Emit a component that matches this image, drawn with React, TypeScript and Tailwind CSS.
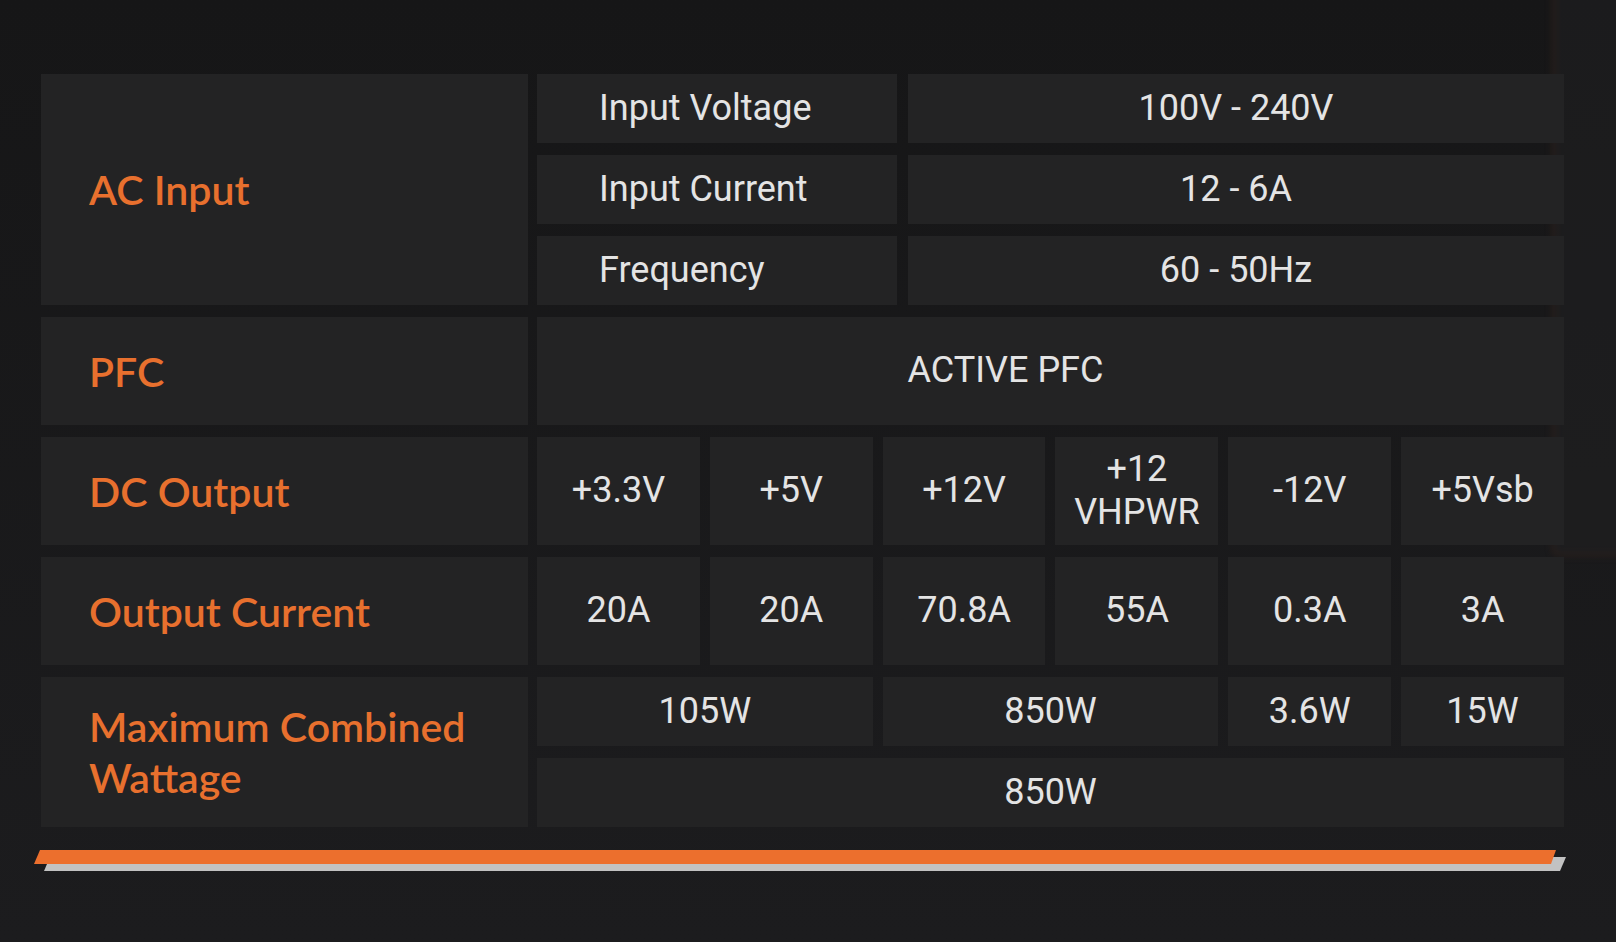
import React from 'react';

const cell = 'bg-[#232324] flex items-center justify-center text-center';
const valueText = "font-['Roboto',sans-serif] text-[36px] leading-[1.2] text-[#e4e4e4]";
const labelText = "font-['Lato','Open_Sans',sans-serif] font-semibold text-[41px] leading-[51px] text-[#e8702e]";

const dcRails = ['+3.3V', '+5V', '+12V', '+12\nVHPWR', '-12V', '+5Vsb'];
const currents = ['20A', '20A', '70.8A', '55A', '0.3A', '3A'];

const acRows = [
    { label: 'Input Voltage', value: '100V - 240V' },
    { label: 'Input Current', value: '12 - 6A' },
    { label: 'Frequency', value: '60 - 50Hz' },
];

const RowLabel: React.FC<{ children: React.ReactNode }> = ({ children }) => (
    <div className="w-[487px] shrink-0 bg-[#232324] flex items-center pl-[48px]">
        <span className={labelText}>{children}</span>
    </div>
);

export default function App() {
    return (
        <div className="relative w-full h-[942px] overflow-hidden bg-linear-to-b from-[#161617] to-[#1c1c1e]">
            {/* faint glow from the product shot behind */}
            <div className="absolute left-[1552px] top-[-20px] w-[140px] h-[576px] border-l-[3px] border-b-[3px] border-[#3a2419]/60 blur-[3px] rounded-bl-[6px] bg-[#1f1f21]/60" />

            <div className="relative pt-[74px] pl-[41px] w-[1580px] flex flex-col">
                <div className="flex flex-col gap-[12px] w-[1523px]">
                    {/* AC input */}
                    <div className="flex gap-[9px]">
                        <RowLabel>AC Input</RowLabel>
                        <div className="flex-1 flex flex-col gap-[12px]">
                            {acRows.map((r) => (
                                <div key={r.label} className="flex gap-[11px] h-[69px]">
                                    <div className="w-[360px] bg-[#232324] flex items-center pl-[62px]">
                                        <span className={valueText}>{r.label}</span>
                                    </div>
                                    <div className={`flex-1 ${cell}`}>
                                        <span className={valueText}>{r.value}</span>
                                    </div>
                                </div>
                            ))}
                        </div>
                    </div>

                    {/* PFC */}
                    <div className="flex gap-[9px] h-[108px]">
                        <RowLabel>PFC</RowLabel>
                        <div className={`flex-1 ${cell} pr-[90px]`}>
                            <span className={valueText}>ACTIVE PFC</span>
                        </div>
                    </div>

                    {/* DC output */}
                    <div className="flex gap-[9px] h-[108px]">
                        <RowLabel>DC Output</RowLabel>
                        <div className="flex-1 grid grid-cols-6 gap-[10px]">
                            {dcRails.map((v) => (
                                <div key={v} className={cell}>
                                    <span className={`${valueText} whitespace-pre-line`}>{v}</span>
                                </div>
                            ))}
                        </div>
                    </div>

                    {/* Output current */}
                    <div className="flex gap-[9px] h-[108px]">
                        <RowLabel>Output Current</RowLabel>
                        <div className="flex-1 grid grid-cols-6 gap-[10px]">
                            {currents.map((v, i) => (
                                <div key={i} className={cell}>
                                    <span className={valueText}>{v}</span>
                                </div>
                            ))}
                        </div>
                    </div>

                    {/* Max combined wattage */}
                    <div className="flex gap-[9px] h-[150px]">
                        <RowLabel>
                            Maximum Combined
                            <br />
                            Wattage
                        </RowLabel>
                        <div className="flex-1 grid grid-cols-6 grid-rows-2 gap-x-[10px] gap-y-[12px]">
                            <div className={`col-span-2 ${cell}`}>
                                <span className={valueText}>105W</span>
                            </div>
                            <div className={`col-span-2 ${cell}`}>
                                <span className={valueText}>850W</span>
                            </div>
                            <div className={cell}>
                                <span className={valueText}>3.6W</span>
                            </div>
                            <div className={cell}>
                                <span className={valueText}>15W</span>
                            </div>
                            <div className={`col-span-6 ${cell}`}>
                                <span className={valueText}>850W</span>
                            </div>
                        </div>
                    </div>
                </div>

                {/* accent bar */}
                <svg className="mt-[23px] ml-[-7px]" width="1536" height="22" viewBox="0 0 1536 22">
                    <polygon points="16,7 1532,7 1526,21 10,21" fill="#c2c2c2" />
                    <polygon points="6,0 1522,0 1517,14 0,14" fill="#ec6f2d" />
                </svg>
            </div>
        </div>
    );
}
